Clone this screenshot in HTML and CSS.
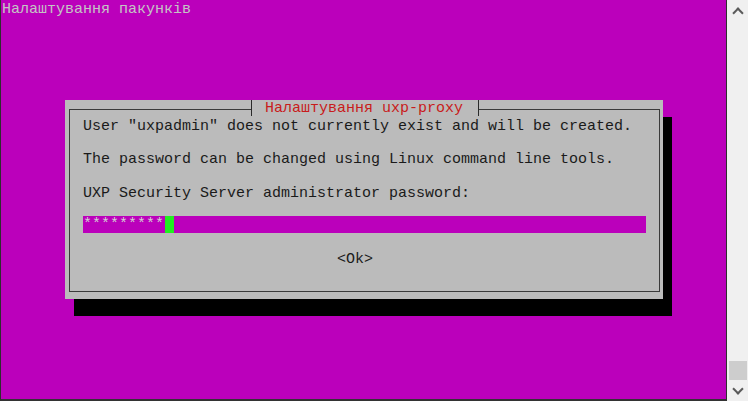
FILE: index.html
```html
<!DOCTYPE html>
<html lang="uk">
<head>
<meta charset="utf-8">
<title>Налаштування пакунків</title>
<link rel="stylesheet" href="styles.css">
</head>
<body>
<div class="window">
  <div class="term">
    <div class="backtitle">Налаштування пакунків</div>
    <div class="dialog">
      <div class="frame">
        <p class="line">User "uxpadmin" does not currently exist and will be created.</p>
        <p class="line">The password can be changed using Linux command line tools.</p>
        <p class="line">UXP Security Server administrator password:</p>
        <div class="field"><span class="stars">*********</span><span class="cursor"></span></div>
        <div class="buttons"><span class="ok">&lt;Ok&gt;</span></div>
      </div>
      <div class="title">Налаштування uxp-proxy</div>
    </div>
  </div>
  <div class="scrollbar">
    <div class="arrow-box"><span class="chev chev-up"></span></div>
    <div class="track"><div class="thumb"></div></div>
    <div class="arrow-box"><span class="chev chev-down"></span></div>
  </div>
</div>
</body>
</html>
```

FILE: styles.css
```css
html, body {
  margin: 0;
  padding: 0;
  background: #f0f0f0;
}

.window {
  display: flex;
  width: 748px;
  height: 401px;
  overflow: hidden;
}

.term {
  flex: none;
  width: 725px;
  height: 399px;
  background: #bb00bb;
  border-left: 1px solid #2e2e2e;
  border-right: 1px solid #2e2e2e;
  border-bottom: 2px solid #333333;
  display: flex;
  flex-direction: column;
  font-family: "Liberation Mono", "Courier New", monospace;
  font-size: 15px;
  line-height: 16.6px;
}

.backtitle {
  color: #c4c4c4;
  padding: 2px 0 0 1px;
  height: 16.6px;
  white-space: pre;
}

.dialog {
  position: relative;
  margin-top: 81.4px;
  margin-left: 64px;
  width: 598px;
  height: 199px;
  background: #bbbbbb;
  box-shadow: 9px 17px 0 #000000;
  display: flex;
}

.frame {
  margin: 9px 3px 7px 4px;
  flex: 1;
  border: 1px solid #3a3a3a;
  padding: 9.2px 0 0 13px;
  color: #1a1a1a;
}

.line {
  margin: 0 0 16.6px 0;
  height: 16.6px;
  white-space: pre;
}

.field {
  display: flex;
  width: 563px;
  height: 16.6px;
  background: #bb00bb;
  margin-top: -2.6px;
  margin-bottom: 19.2px;
}

.stars {
  color: #d2d2d2;
  white-space: pre;
  position: relative;
  top: 1px;
}

.cursor {
  width: 9px;
  height: 16.6px;
  background: #22ee22;
  margin-left: 1px;
}

.buttons {
  padding-left: 254px;
  height: 16.6px;
}

.ok {
  color: #1a1a1a;
}

.title {
  position: absolute;
  top: 0;
  left: 186px;
  height: 16px;
  line-height: 18px;
  padding: 0 15px 0 13px;
  background: #bbbbbb;
  border-left: 1px solid #2a2a2a;
  border-right: 1px solid #2a2a2a;
  color: #c81c1c;
  white-space: pre;
}

.scrollbar {
  flex: none;
  width: 21px;
  height: 401px;
  background: #f0f0f0;
  display: flex;
  flex-direction: column;
}

.arrow-box {
  flex: none;
  height: 21px;
  display: flex;
  align-items: center;
  justify-content: center;
}

.chev {
  display: block;
  width: 6px;
  height: 6px;
  border-left: 2px solid #5a5a5a;
  border-top: 2px solid #5a5a5a;
}

.chev-up {
  transform: translateY(2px) rotate(45deg);
}

.chev-down {
  transform: translateY(-2px) rotate(225deg);
}

.track {
  flex: 1;
  display: flex;
  flex-direction: column;
  justify-content: flex-end;
}

.thumb {
  height: 19px;
  margin: 0 1px 0 2px;
  background: #cdcdcd;
}
```
